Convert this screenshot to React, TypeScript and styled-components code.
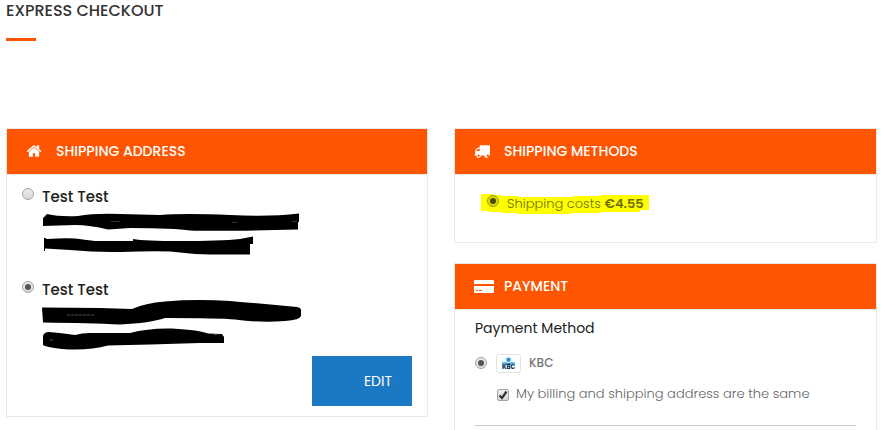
import React from "react";
import styled, { createGlobalStyle, css } from "styled-components";

const orange = "#ff5500";
const line = "#e9e9e9";

const GlobalStyle = createGlobalStyle`
  *, *::before, *::after { box-sizing: border-box; }
  html { scrollbar-width: none; }
  body {
    margin: 0;
    background: #fff;
    color: #222;
    font-family: Poppins, Inter, "Liberation Sans", sans-serif;
    font-size: 14px;
    line-height: 24px;
  }
`;

const Page = styled.main`
  padding: 0 12px 0 6px;
`;

const Title = styled.h1`
  margin: 0 0 87px;
  padding-bottom: 20px;
  position: relative;
  font-size: 16px;
  font-weight: 500;
  line-height: 21px;
  color: #333;

  &::after {
    content: "";
    position: absolute;
    left: 0;
    bottom: 0;
    width: 30px;
    height: 3px;
    background: ${orange};
  }
`;

const Columns = styled.div`
  display: grid;
  grid-template-columns: minmax(0, 422fr) minmax(0, 423fr);
  align-items: start;
  gap: 26px;
`;

const Column = styled.div`
  display: flex;
  flex-direction: column;
  gap: 20px;
`;

const Panel = styled.section`
  border: 1px solid ${line};
`;

const PanelHeader = styled.header`
  display: flex;
  align-items: center;
  height: 46px;
  padding: 0 0 2px 19px;
  border-bottom: 1px solid ${line};
  background: ${orange};
  background-clip: padding-box;
  color: #fff;
`;

const IconSlot = styled.span`
  display: flex;
  width: 30px;

  svg { display: block; fill: currentColor; }
`;

const PanelTitle = styled.h2`
  margin: 0;
  font-size: 14px;
  font-weight: 500;
  line-height: 24px;
`;

const AddressBody = styled.div`
  display: flex;
  flex-direction: column;
  padding: 10px 15px;
`;

const AddressOption = styled.div<{ $last?: boolean }>`
  display: grid;
  grid-template-columns: 20px 1fr;
  margin-bottom: ${(p) => (p.$last ? 6 : 21)}px;
`;

const AddressName = styled.label`
  font-size: 15px;
  font-weight: 500;
  line-height: 24px;
`;

const controlFace = css`
  appearance: none;
  flex: none;
  display: grid;
  place-content: center;
  width: 12px;
  height: 12px;
  margin: 0;
  border: 1px solid #a3a3a3;
  background: linear-gradient(#ececec, #d9d9d9);
`;

const Radio = styled.input.attrs({ type: "radio" })<{ $olive?: boolean }>`
  ${controlFace}
  border-radius: 50%;
  ${(p) => p.$olive && "border-color: #989800; background: #dcdc00;"}

  &:checked::before {
    content: "";
    width: 6px;
    height: 6px;
    border-radius: 50%;
    background: ${(p) => (p.$olive ? "#4c4c00" : "#555")};
  }
`;

const AddressRadio = styled(Radio)`
  margin-top: 3px;
`;

const Scribbles = styled.svg`
  grid-column: 2;
  display: block;
  width: 260px;
  height: 48px;
  overflow: visible;
`;

const EditButton = styled.button`
  align-self: flex-end;
  width: 100px;
  height: 50px;
  padding: 0 20px;
  border: 0;
  background: #1b78c2;
  color: #fff;
  font: inherit;
  text-align: right;
`;

const ShippingBody = styled.div`
  padding: 16px 26px 26px;
`;

const Highlighted = styled.div`
  position: relative;
  display: flex;
  align-items: center;
  width: max-content;
  padding-left: 6px;
  color: #6f6f00;
`;

const Marker = styled.svg`
  position: absolute;
  left: 0;
  top: 0;
  width: 168px;
  height: 24px;
`;

const MarkedLabel = styled.label`
  position: relative;
  display: flex;
  align-items: center;
  gap: 8px;
  padding-top: 1px;
  font-size: 13px;
  font-weight: 300;

  input { margin-bottom: 6px; }
  strong { font-weight: 600; }
`;

const PaymentBody = styled.div`
  padding: 6px 20px 20px;
`;

const MethodTitle = styled.h3`
  margin: 0 0 11px;
  font-size: 14px;
  font-weight: 400;
  line-height: 24px;
`;

const MethodLabel = styled.label`
  display: flex;
  align-items: center;
  color: #777;
  font-size: 12px;
  font-weight: 500;
`;

const BankCard = styled.span`
  display: grid;
  place-items: center;
  width: 25px;
  height: 19px;
  margin: 0 8px 0 9px;
  border: 1px solid #e3e3e3;
  border-radius: 3px;
`;

const SameAddress = styled.label`
  display: flex;
  align-items: center;
  gap: 7px;
  margin: 7px 0 19px 22px;
  color: #666;
  font-size: 13px;
  font-weight: 300;
`;

const Checkbox = styled.input.attrs({ type: "checkbox" })`
  ${controlFace}
  border-radius: 2px;
`;

const TickBox = styled.span`
  display: grid;
  margin-top: 2px;

  > * { grid-area: 1 / 1; }
  svg { pointer-events: none; opacity: 0; }
  input:checked + svg { opacity: 1; }
`;

const Rule = styled.hr`
  margin: 0;
  border: 0;
  border-top: 1px solid #c8c8c8;
`;

const HomeIcon = () => (
  <svg width="16" height="16" viewBox="0 0 1792 1792" aria-hidden="true">
    <path d="M1472 992v480q0 26-19 45t-45 19h-384v-384h-256v384h-384q-26 0-45-19t-19-45v-480q0-1 .5-3t.5-3l575-474 575 474q1 2 1 6zm223-69l-62 74q-8 9-21 11h-3q-13 0-21-7l-692-577-692 577q-12 8-24 7-13-2-21-11l-62-74q-8-10-7-23.5t11-21.5l719-599q32-26 76-26t76 26l244 204v-195q0-14 9-23t23-9h192q14 0 23 9t9 23v408l219 182q10 8 11 21.5t-7 23.5z" />
  </svg>
);

const TruckIcon = () => (
  <svg width="16" height="16" viewBox="0 0 1792 1792" aria-hidden="true">
    <path d="M640 1408q0-52-38-90t-90-38-90 38-38 90 38 90 90 38 90-38 38-90zM256 896h384v-256h-158q-13 0-22 9l-195 195q-9 9-9 22v30zM1664 1408q0-52-38-90t-90-38-90 38-38 90 38 90 90 38 90-38 38-90zM1792 320v1024q0 15-4 26.5t-13.5 18.5-16.5 11.5-23.5 6-22.5 2-25.5 0-22.5-.5q0 106-75 181t-181 75-181-75-75-181h-384q0 106-75 181t-181 75-181-75-75-181h-64q-3 0-22.5.5t-25.5 0-22.5-2-23.5-6-16.5-11.5-13.5-18.5-4-26.5q0-26 19-45t45-19v-320q0-8-.5-35t0-38 2.5-34.5 6.5-37 14-30.5 22.5-30l198-198q19-19 50.5-32t58.5-13h160v-192q0-26 19-45t45-19h1024q26 0 45 19t19 45z" />
  </svg>
);

const CardIcon = () => (
  <svg width="20" height="14" viewBox="0 0 20 14" aria-hidden="true">
    <path d="M1 1h18q1 0 1 1V5H0V2q0-1 1-1zM0 7h20V13q0 1-1 1H1q-1 0-1-1zM2 11v1h2v-1zM5 11v1h3v-1z" fillRule="evenodd" />
  </svg>
);

const KbcLogo = () => (
  <svg width="15" height="13" viewBox="0 0 15 13" role="img" aria-label="KBC">
    <circle cx="7.500" cy="2.800" r="2.300" fill="#1c9ad6" />
    <path d="M1 7.500V6q0-1 1-1h3l2.500 1.500L10 5H13q1 0 1 1V7.500z" fill="#5bb8e2" />
    <path d="M4 7.500l3.500-1.700 3.500 1.700z" fill="#0b6fa8" />
    <text x="7.500" y="11.800" textAnchor="middle" fontFamily="Inter, sans-serif" fontSize="6" fontWeight="900" fill="#0b3a66">KBC</text>
  </svg>
);

const App = () => (
  <>
    <GlobalStyle />
    <Page>
      <Title>EXPRESS CHECKOUT</Title>
      <Columns>
        <Panel>
          <PanelHeader>
            <IconSlot><HomeIcon /></IconSlot>
            <PanelTitle>SHIPPING ADDRESS</PanelTitle>
          </PanelHeader>
          <AddressBody>
            <AddressOption>
              <AddressRadio id="address-1" name="address" />
              <AddressName htmlFor="address-1">Test Test</AddressName>
              <Scribbles viewBox="42 209 260 48" aria-hidden="true">
                <path d="M43 218L47 214Q60 217 78 216Q95 213 120 214L160 215Q185 213 230 215Q270 217 299 213.500V222H298V229.500Q220 231.500 190 230.500Q175 228 130 228L108 229.500Q90 225 75 225L43 226Z" />
                <path d="M44 237.500L47 239Q62 238 75 238.500Q88 240 95 241H133V239Q145 241 180 241Q220 241 240 239L253 236.500V244H250V254.500H210Q190 254 170 251.500Q150 251 120 252Q95 252.500 70 250L45 248.500V251H44Z" />
                <path d="M44.500 217.500l2-1.500M111 221.500h9M232 222.500h5M292 221.500h5" stroke="#555" strokeWidth="0.600" />
              </Scribbles>
            </AddressOption>
            <AddressOption $last>
              <AddressRadio id="address-2" name="address" defaultChecked />
              <AddressName htmlFor="address-2">Test Test</AddressName>
              <Scribbles viewBox="42 302 260 48" aria-hidden="true">
                <path d="M42 307.500L100 308L132 309Q145 303 165 301.500Q195 299 230 301Q265 304 297 307Q301 308 301 310V316Q300 320 285 321Q260 323 235 319.500Q220 318 165 318Q150 323 120 324.500Q90 323 43 322.500Z" />
                <path d="M43 336Q44 332 49 332Q62 333 75 335Q82 333 90 333H130Q148 328 172 328.500Q200 330 208 333.500L222 334L224 337V343H200L150 344.500L108 345.500Q88 351 62 349Q45 347 43 345Z" />
                <path d="M67 315h28M50 340h3M214 334.500h5" stroke="#888" strokeWidth="0.600" strokeDasharray="3 1" />
              </Scribbles>
            </AddressOption>
            <EditButton type="button">EDIT</EditButton>
          </AddressBody>
        </Panel>

        <Column>
          <Panel>
            <PanelHeader>
              <IconSlot><TruckIcon /></IconSlot>
              <PanelTitle>SHIPPING METHODS</PanelTitle>
            </PanelHeader>
            <ShippingBody>
              <Highlighted>
                <Marker viewBox="0 0 168 24" aria-hidden="true">
                  <path d="M0 3H12V4H20V5H37V6H92V5H120V4H168V19H159V21H120V22H91V23H36V22H20V21H8V20H0Z" fill="#ff0" />
                </Marker>
                <MarkedLabel>
                  <Radio name="shipping" $olive defaultChecked />
                  <span>Shipping costs <strong>€4.55</strong></span>
                </MarkedLabel>
              </Highlighted>
            </ShippingBody>
          </Panel>

          <Panel>
            <PanelHeader>
              <IconSlot><CardIcon /></IconSlot>
              <PanelTitle>PAYMENT</PanelTitle>
            </PanelHeader>
            <PaymentBody>
              <MethodTitle>Payment Method</MethodTitle>
              <MethodLabel>
                <Radio name="payment" defaultChecked />
                <BankCard><KbcLogo /></BankCard>
                KBC
              </MethodLabel>
              <SameAddress>
                <TickBox>
                  <Checkbox defaultChecked />
                  <svg width="12" height="12" viewBox="0 0 12 12" aria-hidden="true">
                    <path d="M2.500 6.500L5 9L9.500 2.500" fill="none" stroke="#333" strokeWidth="2.200" />
                  </svg>
                </TickBox>
                My billing and shipping address are the same
              </SameAddress>
              <Rule />
            </PaymentBody>
          </Panel>
        </Column>
      </Columns>
    </Page>
  </>
);

export default App;
